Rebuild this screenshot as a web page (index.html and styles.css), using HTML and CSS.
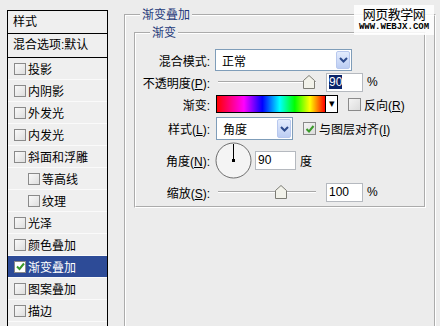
FILE: index.html
```html
<!DOCTYPE html>
<html lang="zh-CN">
<head>
  <meta charset="UTF-8">
  <title>图层样式 - 渐变叠加</title>
  <link rel="stylesheet" href="styles.css">
</head>
<body>

  <div class="dialog">
    <div class="style-list">
      <div class="list-head">样式</div>
      <div class="list-blend">混合选项:默认</div>
      <div class="list-item"><span class="check"></span>投影</div>
      <div class="list-item"><span class="check"></span>内阴影</div>
      <div class="list-item"><span class="check"></span>外发光</div>
      <div class="list-item"><span class="check"></span>内发光</div>
      <div class="list-item"><span class="check"></span>斜面和浮雕</div>
      <div class="list-item sub"><span class="check"></span>等高线</div>
      <div class="list-item sub"><span class="check"></span>纹理</div>
      <div class="list-item"><span class="check"></span>光泽</div>
      <div class="list-item"><span class="check"></span>颜色叠加</div>
      <div class="list-item active">
        <span class="check"><svg width="9" height="9" viewBox="0 0 9 9"><path d="M1 4.5 L3.5 7 L8 1.5" fill="none" stroke="#3a9a2a" stroke-width="2"/></svg></span>渐变叠加
      </div>
      <div class="list-item"><span class="check"></span>图案叠加</div>
      <div class="list-item"><span class="check"></span>描边</div>
      <div class="list-item"></div>
    </div>

    <fieldset class="group outer">
      <legend>渐变叠加</legend>
      <fieldset class="group inner">
        <legend>渐变</legend>
        <div class="form">
          <label>混合模式:</label>
          <div class="ctrl">
            <div class="select wide">正常<span class="drop"><svg width="9" height="6" viewBox="0 0 9 6"><path d="M1 1 L4.5 4.5 L8 1" fill="none" stroke="#2d4a8c" stroke-width="2"/></svg></span></div>
          </div>

          <label>不透明度(<u>P</u>):</label>
          <div class="ctrl">
            <div class="slider">
              <span class="track"></span>
              <svg class="thumb" style="left: 85px" width="12" height="14" viewBox="0 0 12 14"><path d="M0.5 13.5 V5.5 L6 0.5 L11.5 5.5 V13.5 Z" fill="#f2f2ea" stroke="#7c7c74"/></svg>
            </div>
            <div class="num"><span class="sel">90</span></div>
            <span class="unit">%</span>
          </div>

          <label>渐变:</label>
          <div class="ctrl">
            <div class="swatch"></div>
            <div class="swatch-drop">▾</div>
            <span class="box gap-r"></span>
            <span class="opt">反向(<u>R</u>)</span>
          </div>

          <label>样式(<u>L</u>):</label>
          <div class="ctrl">
            <div class="select narrow">角度<span class="drop"><svg width="9" height="6" viewBox="0 0 9 6"><path d="M1 1 L4.5 4.5 L8 1" fill="none" stroke="#2d4a8c" stroke-width="2"/></svg></span></div>
            <span class="box gap-a"><svg width="10" height="10" viewBox="0 0 10 10"><path d="M1.5 5 L4 7.5 L8.5 2" fill="none" stroke="#3a9a2a" stroke-width="2"/></svg></span>
            <span class="opt">与图层对齐(<u>I</u>)</span>
          </div>

          <label>角度(<u>N</u>):</label>
          <div class="ctrl">
            <svg class="dial" width="37" height="37" viewBox="0 0 37 37">
              <circle cx="18.5" cy="18.5" r="17.5" fill="#f4f4f4" stroke="#6e6e6e"/>
              <line x1="18.5" y1="18.5" x2="18.5" y2="2" stroke="#000"/>
              <rect x="17" y="17" width="3" height="3" fill="#000"/>
            </svg>
            <div class="num angle">90</div>
            <span class="unit">度</span>
          </div>

          <label>缩放(<u>S</u>):</label>
          <div class="ctrl">
            <div class="slider">
              <span class="track"></span>
              <svg class="thumb" style="left: 57px" width="12" height="14" viewBox="0 0 12 14"><path d="M0.5 13.5 V5.5 L6 0.5 L11.5 5.5 V13.5 Z" fill="#f2f2ea" stroke="#7c7c74"/></svg>
            </div>
            <div class="num">100</div>
            <span class="unit">%</span>
          </div>
        </div>
      </fieldset>
    </fieldset>

    <div class="watermark">
      <div class="wm-cn">网页教学网</div>
      <div class="wm-en">WWW.WEBJX.COM</div>
    </div>
  </div>

</body>
</html>
```

FILE: styles.css
```css
body {
  margin: 0;
  background-color: #ececec;
  font-family: "Liberation Sans", "Noto Sans CJK SC", sans-serif;
  font-size: 12px;
  color: #000;
  overflow: hidden;
}

.dialog {
  position: relative;
  display: flex;
  align-items: flex-start;
  height: 326px;
  padding-left: 7px;
  overflow: hidden;
}

/* left style list */
.style-list {
  box-sizing: border-box;
  width: 101px;
  height: 340px;
  margin-top: 10px;
  border: 1px solid #000;
  background-color: #efefef;
  flex-shrink: 0;
}

.list-head {
  height: 22px;
  line-height: 22px;
  padding-left: 5px;
  border-bottom: 1px solid #000;
}

.list-blend {
  height: 23px;
  line-height: 23px;
  padding-left: 5px;
  border-bottom: 1px solid #000;
}

.list-item {
  display: flex;
  align-items: center;
  height: 21px;
  border-bottom: 1px solid #fafafa;
}

.list-item.sub .check {
  margin-left: 20px;
}

.list-item.active {
  background-color: #2d4b97;
  color: #fff;
}

.check {
  box-sizing: border-box;
  display: inline-flex;
  align-items: center;
  justify-content: center;
  width: 12px;
  height: 12px;
  margin-left: 6px;
  margin-right: 2px;
  border: 1px solid #8a8a8a;
  background: linear-gradient(135deg, #fafafa, #dedede);
}

.active .check {
  background: #fff;
}

/* group boxes */
.group {
  border: 2px groove #fff;
  margin: 0;
  min-width: 0;
}

.group legend {
  line-height: 14px;
  padding: 0 2px;
  color: #1f3a7a;
}

.outer {
  box-sizing: border-box;
  width: 312px;
  height: 340px;
  margin-top: 8px;
  margin-left: 16px;
  padding: 4px 8px 0 8px;
}

.outer > legend {
  margin-left: 6px;
}

.inner {
  padding: 9px 0 0 0;
}

.inner > legend {
  margin-left: 14px;
}

/* form grid */
.form {
  display: grid;
  grid-template-columns: 74px 1fr;
  grid-template-rows: 22px 22px 22px 27px 36px 28px;
  column-gap: 5px;
}

.form label {
  align-self: center;
  text-align: right;
}

.ctrl {
  display: flex;
  align-items: center;
}

.select {
  box-sizing: border-box;
  position: relative;
  display: flex;
  align-items: center;
  padding-left: 6px;
  background: #fff;
  border: 1px solid #7f9db9;
}

.select.wide {
  width: 137px;
  height: 22px;
}

.select.narrow {
  width: 77px;
  height: 23px;
  margin-left: 1px;
}

.drop {
  position: absolute;
  top: 1px;
  right: 1px;
  bottom: 1px;
  width: 14px;
  display: flex;
  align-items: center;
  justify-content: center;
  box-sizing: border-box;
  border: 1px solid #b8c8ee;
  border-radius: 2px;
  background: linear-gradient(#e4ecfd, #bccdf3);
}

.slider {
  position: relative;
  width: 98px;
  height: 14px;
  margin-left: 3px;
}

.track {
  position: absolute;
  left: 0;
  right: 0;
  top: 6px;
  height: 1px;
  background: #a8a8a8;
  border-bottom: 1px solid #fff;
}

.thumb {
  position: absolute;
  top: 0;
}

.num {
  box-sizing: border-box;
  width: 37px;
  height: 19px;
  line-height: 17px;
  margin-left: 10px;
  padding-left: 2px;
  background: #fff;
  border: 1px solid #b5b9bf;
}

.num .sel {
  background: #0a246a;
  color: #fff;
}

.num.angle {
  width: 41px;
  margin-left: 3px;
}

.unit {
  margin-left: 4px;
}

.swatch {
  box-sizing: border-box;
  width: 110px;
  height: 18px;
  margin-left: 1px;
  border: 1px solid #000;
  background: linear-gradient(90deg, #ff0000 0%, #ff00ff 25%, #0000ff 42%, #00ffff 58%, #00ff00 72%, #ffff00 86%, #ff0000 100%);
}

.swatch-drop {
  box-sizing: border-box;
  width: 12px;
  height: 18px;
  line-height: 14px;
  text-align: center;
  font-size: 11px;
  background: #fff;
  border: 1px solid #000;
  border-left: none;
}

.box {
  box-sizing: border-box;
  display: inline-flex;
  align-items: center;
  justify-content: center;
  width: 13px;
  height: 13px;
  border: 1px solid #8a8a8a;
  background: linear-gradient(135deg, #f4f4f4, #dcdcdc);
}

.gap-r {
  margin-left: 10px;
}

.gap-a {
  margin-left: 10px;
}

.opt {
  margin-left: 3px;
}

.dial {
  display: block;
}

/* watermark */
.watermark {
  position: absolute;
  top: 5px;
  left: 354px;
  width: 80px;
  padding: 2px 0 3px;
  background: rgba(255, 255, 255, 0.85);
  text-align: center;
}

.wm-cn {
  font-size: 13px;
  line-height: 15px;
  letter-spacing: -0.5px;
}

.wm-en {
  font-family: "Liberation Mono", monospace;
  font-weight: bold;
  font-size: 9px;
  line-height: 10px;
}
```
